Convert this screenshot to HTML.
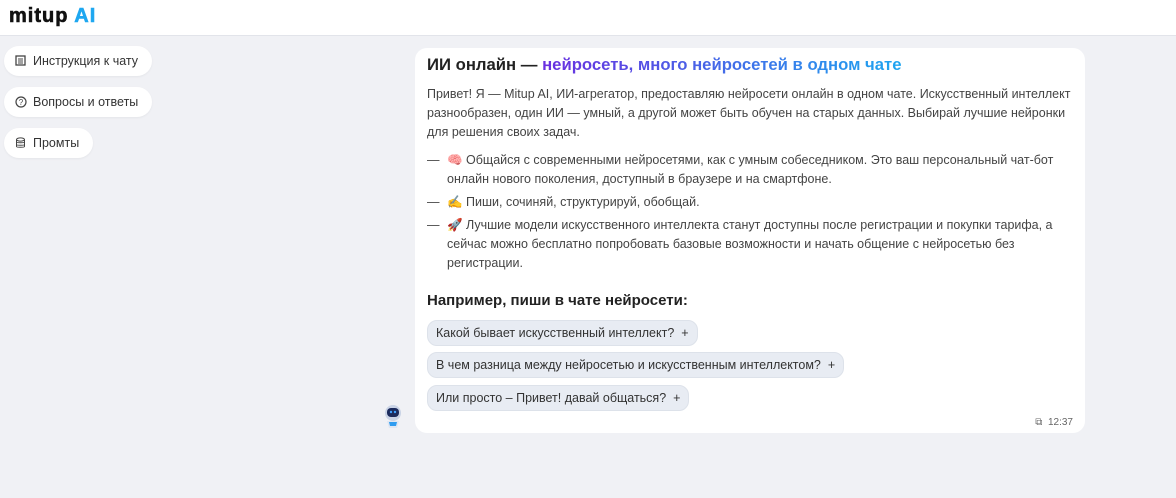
<!DOCTYPE html>
<html><head><meta charset="utf-8"><style>
body{margin:0;width:1176px;height:498px;background:#f0f1f5;font-family:"Liberation Sans","DejaVu Sans",sans-serif;color:#333;overflow:hidden;position:relative}
.hdr{position:absolute;left:0;top:0;width:1176px;height:35px;background:#fff;border-bottom:1px solid #e2e4ea}
.logo{position:absolute;left:9px;top:5px;font-size:20px;font-weight:bold;letter-spacing:1px;color:#111;-webkit-text-stroke:0.6px #111}
.logo span{color:#1ea7f0;-webkit-text-stroke:0.6px #1ea7f0}
.btn{position:absolute;left:4px;height:30px;background:#fff;border-radius:15px;font-size:12.5px;line-height:30px;padding:0 14px 0 29px;color:#333;box-shadow:0 1px 2px rgba(0,0,0,.05)}
.btn svg{position:absolute;left:11px;top:9px;display:block}
.card{position:absolute;left:415px;top:48px;width:670px;height:385px;background:#fff;border-radius:12px}
h1{position:absolute;left:12px;top:7px;margin:0;font-size:16.7px;font-weight:bold;color:#222;white-space:nowrap}
h1 b{background:linear-gradient(90deg,#6a2fe0,#1ea5f0);-webkit-background-clip:text;color:transparent}
.p{position:absolute;left:12px;font-size:12.5px;line-height:19px;color:#444;width:655px}
.li{padding-left:20px;position:relative}
.li:before{content:"—";position:absolute;left:0}
h2{position:absolute;left:12px;top:244px;margin:0;font-size:15px;font-weight:bold;color:#222}
.chip{position:absolute;left:12px;height:24px;line-height:24px;background:#e8ecf3;border:1px solid #dde2ea;border-radius:10px;padding:0 8px;font-size:12.5px;color:#333;white-space:nowrap}
.time{position:absolute;right:12px;bottom:5px;font-size:10px;color:#666}
</style></head><body>
<div class="hdr"><div class="logo">mitup <span>AI</span></div></div>
<div class="btn" style="top:46px"><svg width="11" height="11"><rect x="1" y="1" width="9" height="9" fill="none" stroke="#444" stroke-width="1.3"/><path d="M3 4h5M3 6h5M3 8h5" stroke="#444"/></svg>Инструкция к чату</div>
<div class="btn" style="top:87px"><svg width="12" height="12"><circle cx="6" cy="6" r="5" fill="none" stroke="#444" stroke-width="1.2"/><text x="6" y="9" font-size="8" text-anchor="middle" fill="#444" font-family="Liberation Sans">?</text></svg>Вопросы и ответы</div>
<div class="btn" style="top:128px"><svg width="11" height="12"><ellipse cx="5.5" cy="2.5" rx="4" ry="1.6" fill="none" stroke="#444"/><path d="M1.5 2.5v7c0 1 8 1 8 0v-7M1.5 5c0 1 8 1 8 0M1.5 7.5c0 1 8 1 8 0" fill="none" stroke="#444"/></svg>Промты</div>
<svg style="position:absolute;left:381px;top:403px" width="24" height="28"><circle cx="12" cy="10" r="8" fill="#c9d3e6"/><rect x="6" y="5" width="12" height="9" rx="4" fill="#1b2a5c"/><circle cx="10" cy="9" r="1.2" fill="#3fa0ff"/><circle cx="14" cy="9" r="1.2" fill="#3fa0ff"/><path d="M6 18h12l-2 7h-8z" fill="#dfe6f2"/><path d="M8 19h8l-1 4h-6z" fill="#2f9cf0"/></svg>
<div class="card">
<h1>ИИ онлайн — <b>нейросеть, много нейросетей в одном чате</b></h1>
<div class="p" style="top:37px">Привет! Я — Mitup AI, ИИ-агрегатор, предоставляю нейросети онлайн в одном чате. Искусственный интеллект разнообразен, один ИИ — умный, а другой может быть обучен на старых данных. Выбирай лучшие нейронки для решения своих задач.</div>
<div class="p" style="top:103px">
<div class="li">🧠 Общайся с современными нейросетями, как с умным собеседником. Это ваш персональный чат-бот онлайн нового поколения, доступный в браузере и на смартфоне.</div>
<div class="li" style="margin-top:4px">✍️ Пиши, сочиняй, структурируй, обобщай.</div>
<div class="li" style="margin-top:4px">🚀 Лучшие модели искусственного интеллекта станут доступны после регистрации и покупки тарифа, а сейчас можно бесплатно попробовать базовые возможности и начать общение с нейросетью без регистрации.</div>
</div>
<h2>Например, пиши в чате нейросети:</h2>
<div class="chip" style="top:272px">Какой бывает искусственный интеллект? &nbsp;+</div>
<div class="chip" style="top:304px">В чем разница между нейросетью и искусственным интеллектом? &nbsp;+</div>
<div class="chip" style="top:337px">Или просто – Привет! давай общаться? &nbsp;+</div>
<div class="time">⧉ &nbsp;12:37</div>
</div>
</body></html>
